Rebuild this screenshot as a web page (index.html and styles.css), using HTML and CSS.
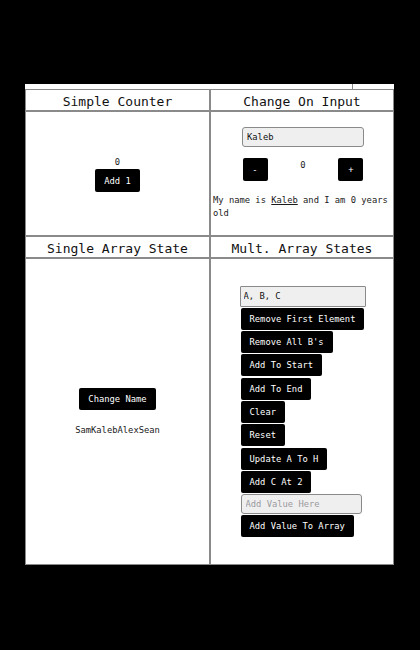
FILE: index.html
```html
<!DOCTYPE html>
<html>
<head>
<meta charset="utf-8">
<link rel="stylesheet" href="styles.css">
</head>
<body>
<div class="page">
  <div class="topbar"><div class="topseg"></div></div>
  <div class="grid">
    <div class="cell head">Simple Counter</div>
    <div class="cell head">Change On Input</div>

    <div class="cell counter">
      <div class="num">0</div>
      <button class="btn">Add 1</button>
    </div>
    <div class="cell change">
      <input class="field name-field" type="text" value="Kaleb">
      <div class="age-row">
        <button class="btn sq">-</button>
        <span class="age">0</span>
        <button class="btn sq">+</button>
      </div>
      <p class="sentence">My name is <span class="ul">Kaleb</span> and I am 0 years old</p>
    </div>

    <div class="cell head">Single Array State</div>
    <div class="cell head">Mult. Array States</div>

    <div class="cell single">
      <button class="btn">Change Name</button>
      <p class="names">SamKalebAlexSean</p>
    </div>
    <div class="cell multi">
      <div class="stack">
        <input class="field list-field" type="text" value="A, B, C">
        <button class="btn">Remove First Element</button>
        <button class="btn">Remove All B's</button>
        <button class="btn">Add To Start</button>
        <button class="btn">Add To End</button>
        <button class="btn">Clear</button>
        <button class="btn">Reset</button>
        <button class="btn">Update A To H</button>
        <button class="btn">Add C At 2</button>
        <input class="field add-field" type="text" placeholder="Add Value Here">
        <button class="btn">Add Value To Array</button>
      </div>
    </div>
  </div>
</div>
</body>
</html>
```
FILE: styles.css
```css
html, body {
  margin: 0;
  padding: 0;
  background: #000;
}
body {
  width: 420px;
  height: 650px;
  font-family: "DejaVu Sans Mono", "Liberation Mono", monospace;
  font-size: 8.8px;
  color: #1a1a1a;
}
.page {
  width: 369px;
  margin: 84px 0 0 25px;
  background: #fff;
}
.topbar {
  height: 5px;
  display: flex;
}
.topseg {
  width: 327px;
  border-right: 1px solid #888;
}
.grid {
  display: grid;
  grid-template-columns: 185px 184px;
  grid-template-rows: 22px 125px 22px 307px;
}
.cell {
  box-sizing: border-box;
  border: 1px solid #8a8a8a;
  background: #fff;
}
.head {
  display: flex;
  align-items: center;
  justify-content: center;
  padding-top: 2px;
  font-size: 13px;
  color: #111;
}
.btn {
  box-sizing: border-box;
  height: 22px;
  padding: 0 9px;
  border: none;
  border-radius: 2px;
  background: #000;
  color: #fff;
  font-family: "DejaVu Sans Mono", "Liberation Mono", monospace;
  font-size: 8.8px;
  line-height: 22px;
  cursor: pointer;
}
.field {
  box-sizing: border-box;
  border: 1px solid #8a8a8a;
  background: #efefef;
  font-family: "DejaVu Sans Mono", "Liberation Mono", monospace;
  font-size: 8.8px;
  color: #111;
  padding: 0 4px;
  margin: 0;
}
.field::placeholder {
  color: #9a9aa0;
}
.counter {
  display: flex;
  flex-direction: column;
  align-items: center;
  justify-content: center;
  padding-top: 1px;
}
.num {
  line-height: 12px;
  margin-bottom: 1px;
}
.counter .btn {
  height: 23px;
}
.change {
  display: flex;
  flex-direction: column;
  justify-content: center;
  padding: 0 1px;
}
.name-field {
  align-self: center;
  width: 122px;
  height: 20px;
  border-radius: 3px;
  margin-left: 2px;
}
.age-row {
  align-self: center;
  width: 121px;
  display: flex;
  justify-content: space-between;
  align-items: flex-start;
  margin: 11px 0 0 2px;
}
.sq {
  width: 25px;
  height: 23px;
  padding: 0;
  text-align: center;
}
.age {
  line-height: 12px;
  margin-top: 1px;
}
.sentence {
  margin: 13px 0 0 1px;
  line-height: 13px;
}
.ul {
  text-decoration: underline;
}
.single {
  display: flex;
  flex-direction: column;
  align-items: center;
  justify-content: center;
  padding-top: 1px;
}
.names {
  margin: 14px 0 0;
  line-height: 12px;
}
.multi {
  display: flex;
  justify-content: center;
  align-items: center;
  padding-left: 2px;
}
.stack {
  display: flex;
  flex-direction: column;
  align-items: flex-start;
  gap: 1.3px;
}
.list-field {
  width: 126px;
  height: 21px;
  border-radius: 1px;
  padding-left: 3px;
  margin-left: -1px;
}
.add-field {
  width: 121px;
  height: 20px;
  border-radius: 3px;
}
```
